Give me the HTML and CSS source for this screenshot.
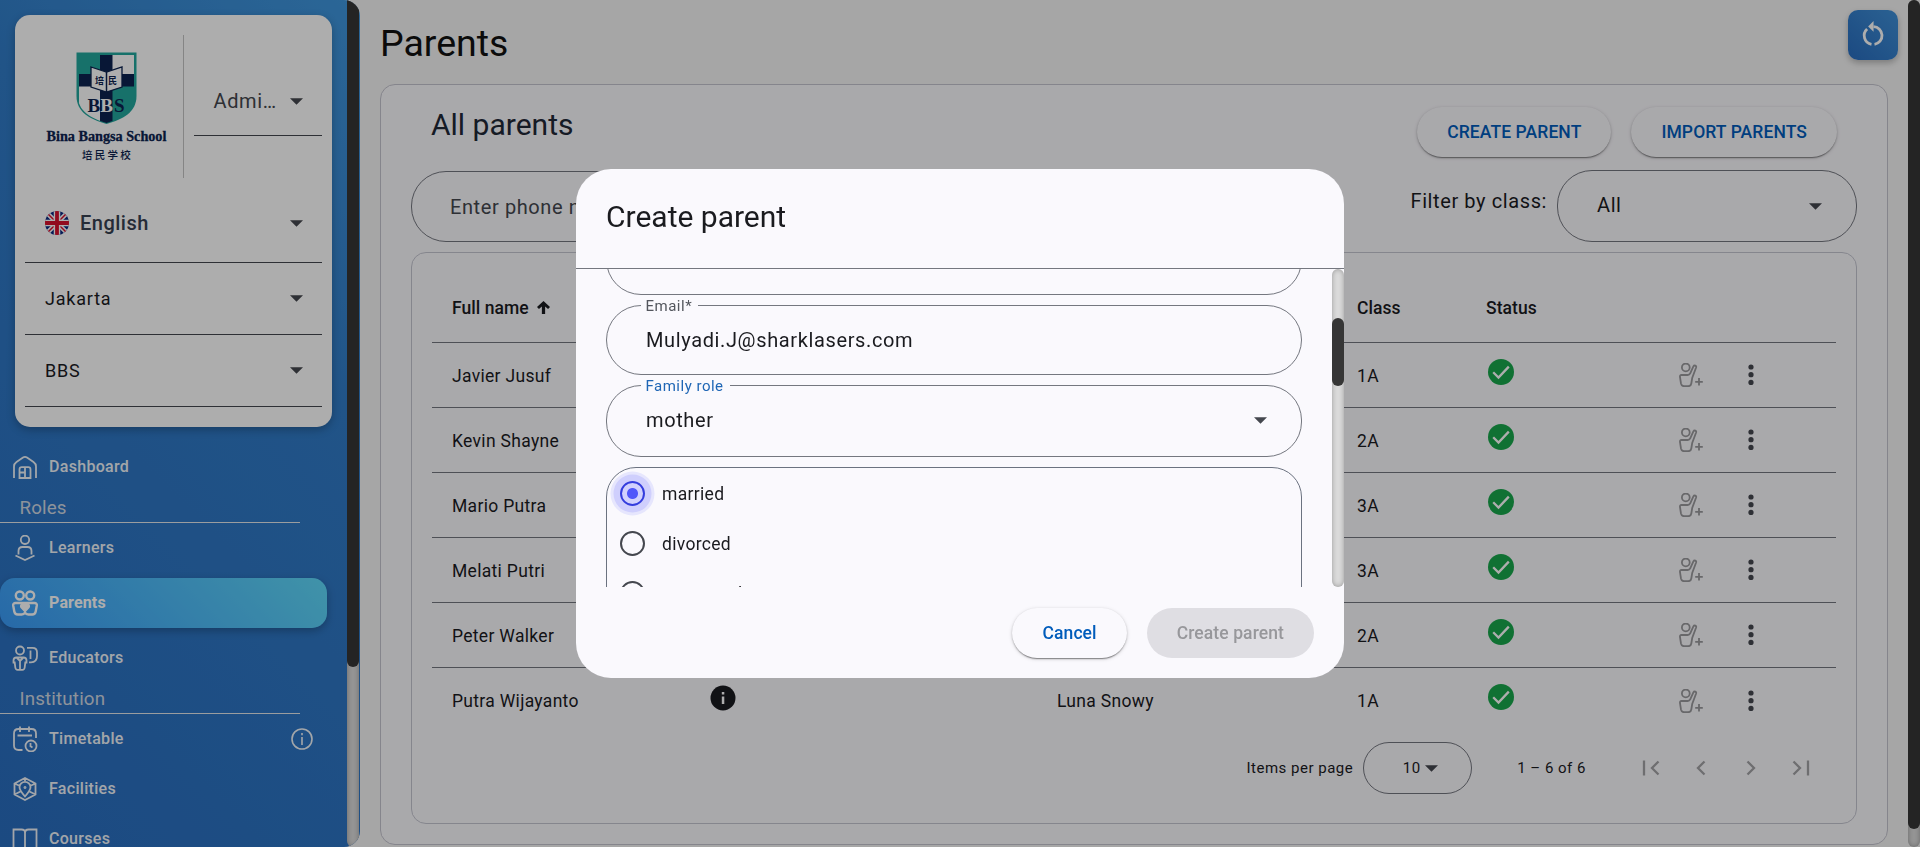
FILE: index.html
```html
<!DOCTYPE html>
<html lang="en">
<head>
<meta charset="utf-8">
<title>Parents</title>
<link rel="stylesheet" href="styles.css">
</head>
<body>
<svg class="sprite" aria-hidden="true">
  <symbol id="caret" viewBox="0 0 14 7"><path d="M0 0h14L7 7z"/></symbol>
  <symbol id="check" viewBox="0 0 26 26"><circle cx="13" cy="13" r="13" fill="#19a74c"/><path d="M5.2 13.3l5.3 5.3L20.8 7.6" fill="none" stroke="#fff" stroke-width="2.3"/></symbol>
  <symbol id="add-child" viewBox="0 0 24 24"><g fill="none" stroke="currentColor" stroke-width="1.8"><circle cx="6.800" cy="4.400" r="3.900"/><path d="M2.500 12h6.200c1.300 0 2-.5 2.500-1.600l3.200-7c.9-1.700 3.300-.8 2.700 1.100L13.200 15l-.9 5.500c-.3 1.800-1.300 2.700-3 2.700H5c-1.700 0-2.700-.9-3-2.500L1 14.200C.8 12.800 1.300 12 2.500 12z"/><path d="M20 15v7.600M16.200 18.800h7.600"/></g></symbol>
  <symbol id="dots" viewBox="0 0 6 22"><circle cx="3" cy="3" r="2.600"/><circle cx="3" cy="10.700" r="2.600"/><circle cx="3" cy="18.400" r="2.600"/></symbol>
</svg>

<aside class="sidebar">
  <div class="sidebar-body">
    <section class="school-card">
      <div class="school-top">
        <div class="logo">
          <svg width="61" height="72" viewBox="0 0 61 72">
            <defs><clipPath id="shield"><path d="M2 2h57v42c0 15-12 22-28.500 27C14 66 2 59 2 44z"/></clipPath></defs>
            <path d="M.5.5h60V44c0 16-13 23-30 28C13.500 67 .5 60 .5 44z" fill="#22a79d"/>
            <g clip-path="url(#shield)">
              <path d="M2 2h57v70H2z" fill="#22a79d"/>
              <path d="M36 3h22v20H36zM3 34h22v36H3z" fill="#fff"/>
              <path d="M24 3h12.500v68H24zM3 22h55v12.500H3z" fill="#0c2350"/>
            </g>
            <path d="M15 15l15.500 5L46 15v20l-15.500 5L15 35z" fill="#fff" stroke="#0c2350" stroke-width="1.300"/>
            <path d="M30.500 20v20" stroke="#0c2350" stroke-width="1.500"/>
            <text x="19" y="31.500" class="logo-han">培</text><text x="32" y="31.500" class="logo-han">民</text>
            <text y="60" class="logo-bbs"><tspan x="11.500">B</tspan><tspan x="24.300" fill="#fff">B</tspan><tspan x="38">S</tspan></text>
          </svg>
          <div class="logo-name">Bina Bangsa School</div>
          <div class="logo-cn">培民学校</div>
        </div>
        <div class="role-select"><span>Admi…</span><svg class="caret"><use href="#caret"/></svg></div>
      </div>
      <div class="line-select language">
        <svg class="flag" viewBox="0 0 24 24">
          <defs><clipPath id="round"><circle cx="12" cy="12" r="12"/></clipPath></defs>
          <g clip-path="url(#round)"><path d="M0 0h24v24H0z" fill="#0b2a80"/><path d="M0 0l24 24M24 0L0 24" stroke="#fff" stroke-width="4.500"/><path d="M0 0l24 24M24 0L0 24" stroke="#d8112d" stroke-width="1.500"/><path d="M12 0v24M0 12h24" stroke="#fff" stroke-width="6.500"/><path d="M12 0v24M0 12h24" stroke="#d8112d" stroke-width="3.800"/></g>
        </svg>
        <span>English</span><svg class="caret"><use href="#caret"/></svg>
      </div>
      <div class="line-select"><span>Jakarta</span><svg class="caret"><use href="#caret"/></svg></div>
      <div class="line-select"><span>BBS</span><svg class="caret"><use href="#caret"/></svg></div>
    </section>

    <nav class="nav">
      <a class="nav-item"><svg class="nav-icon" viewBox="0 0 26 26"><path d="M2 24V12.500C2 10.500 3 9 4.500 8L11 3.500c1.300-.9 2.700-.9 4 0L21.500 8C23 9 24 10.500 24 12.500V24M7.500 24v-8.500c0-1.500.8-2.300 2.300-2.300h6.400c1.500 0 2.300.8 2.300 2.300V24zM7.500 18.500h5M13 13v11"/></svg>Dashboard</a>
      <h3 class="nav-heading">Roles</h3>
      <a class="nav-item spaced"><svg class="nav-icon" viewBox="0 0 26 26"><circle cx="13" cy="4.800" r="4.200"/><path d="M6.500 19.500V16c0-2.500 1.500-4 4-4h5c2.500 0 4 1.500 4 4v3.500M3.500 20.500l9.500 4.500 9.500-4.500"/></svg>Learners</a>
      <a class="nav-item spaced active"><svg class="nav-icon" viewBox="0 0 26 26"><circle cx="7.800" cy="5.500" r="4"/><circle cx="18.200" cy="5.500" r="4"/><path d="M3.500 13h19c1.700 0 2.500 1 2.300 2.500l-1.100 6c-.4 2-1.600 3-3.400 3h-4c-1.500 0-2.500-.5-3.300-1.800-.8 1.300-1.800 1.800-3.300 1.800h-4c-1.800 0-3-1-3.400-3l-1.100-6C1 14 1.800 13 3.500 13z"/><path d="M13 21l-3.500-3.700c-1.500-2.300 1.700-4.300 3.500-2 1.800-2.300 5-.3 3.500 2z" fill="currentColor"/></svg>Parents</a>
      <a class="nav-item"><svg class="nav-icon" viewBox="0 0 26 26"><circle cx="8" cy="5.500" r="4"/><path d="M4.500 12.500h7c2 0 3 1.200 3 3v2h-1.200l-.6 5c-.2 1.500-1 2.300-2.300 2.300H5.600c-1.300 0-2.100-.8-2.300-2.300l-.6-5H1.500v-2c0-1.800 1-3 3-3zM5 13l3 3 3-3M8 16v8M15 2.800h5.500c3 0 4.500 1.500 4.500 4.500v4c0 4-2 6-6 6h-2M18.500 5.500v8.500"/></svg>Educators</a>
      <h3 class="nav-heading">Institution</h3>
      <a class="nav-item"><svg class="nav-icon" viewBox="0 0 26 26"><path d="M10.500 24H6.500c-3 0-4.500-1.500-4.500-4.500V7.500C2 4.500 3.500 3 6.500 3h13C22.500 3 24 4.500 24 7.500V12M8 .5V6M17 .5V6M5.500 9.500H20"/><circle cx="19" cy="20" r="5.500"/><path d="M18.500 17v3.300l2 1.200"/></svg>Timetable<svg class="nav-info" viewBox="0 0 22 22"><circle cx="11" cy="11" r="10"/><path d="M11 9v8M11 5v2.200"/></svg></a>
      <a class="nav-item"><svg class="nav-icon" viewBox="0 0 26 26"><path d="M13 2l10.500 5.500v11L13 24 2.500 18.500v-11zM13 2v3M2.500 7.500l5 2.200M23.500 7.500l-5 2.200M2.500 18.500l6.500-3.300M23.500 18.500L17 15.200M13 20.500c-3.500-4-5.500-6.500-5.500-9.200a5.500 5.500 0 0 1 11 0c0 2.700-2 5.200-5.500 9.200z"/><circle cx="13" cy="11.500" r=".6"/></svg>Facilities</a>
      <a class="nav-item"><svg class="nav-icon" viewBox="0 0 26 26"><path d="M13 7c0-2.500-1-3.500-3.500-3.500H1.500V22H10c2 0 3 .8 3 2.500 0-1.700 1-2.500 3-2.500h8.500V3.500h-8C14 3.500 13 4.500 13 7zv17"/></svg>Courses</a>
    </nav>
  </div>
  <div class="track"><div class="thumb side-thumb"></div></div>
</aside>

<main class="main">
  <div class="content">
    <header class="page-head">
      <h1>Parents</h1>
      <button class="refresh"><svg width="26" height="28" viewBox="0 0 24 26"><g fill="none" stroke="#fff" stroke-width="2.600"><path d="M12.500 5.300a8.200 8.200 0 0 1 .9 16.300"/><path d="M10.600 21.600A8.200 8.200 0 0 1 6.500 7.500"/></g><path d="M12.500 0v10L7.500 5z" fill="#fff"/></svg></button>
    </header>
    <section class="panel">
      <div class="panel-head">
        <h2>All parents</h2>
        <div class="panel-actions"><button class="btn raised">CREATE PARENT</button><button class="btn raised">IMPORT PARENTS</button></div>
      </div>
      <div class="filters">
        <div class="search">Enter phone number</div>
        <div class="class-filter"><span>Filter by class:</span><div class="pill-select">All<svg class="caret"><use href="#caret"/></svg></div></div>
      </div>
      <div class="table-card">
        <div class="row head"><span>Full name<svg class="sort" viewBox="0 0 12 12"><path d="M6 0l6 5.500-1.800 1.900L7.500 5V12h-3V5L1.800 7.400 0 5.500z"/></svg></span><span></span><span></span><span>Class</span><span>Status</span></div>
        <div class="row"><span>Javier Jusuf</span><span></span><span></span><span>1A</span><svg class="check"><use href="#check"/></svg><svg class="add"><use href="#add-child"/></svg><svg class="dots"><use href="#dots"/></svg></div>
        <div class="row"><span>Kevin Shayne</span><span></span><span></span><span>2A</span><svg class="check"><use href="#check"/></svg><svg class="add"><use href="#add-child"/></svg><svg class="dots"><use href="#dots"/></svg></div>
        <div class="row"><span>Mario Putra</span><span></span><span></span><span>3A</span><svg class="check"><use href="#check"/></svg><svg class="add"><use href="#add-child"/></svg><svg class="dots"><use href="#dots"/></svg></div>
        <div class="row"><span>Melati Putri</span><span></span><span></span><span>3A</span><svg class="check"><use href="#check"/></svg><svg class="add"><use href="#add-child"/></svg><svg class="dots"><use href="#dots"/></svg></div>
        <div class="row"><span>Peter Walker</span><span></span><span></span><span>2A</span><svg class="check"><use href="#check"/></svg><svg class="add"><use href="#add-child"/></svg><svg class="dots"><use href="#dots"/></svg></div>
        <div class="row last"><span>Putra Wijayanto</span><svg class="check info" viewBox="0 0 26 26"><circle cx="13" cy="13" r="12.500" fill="#1a1b1f"/><path d="M11.800 11.500h2.500V19h-2.500zM11.800 7h2.500v2.500h-2.500z" fill="#fff"/></svg><span>Luna Snowy</span><span>1A</span><svg class="check"><use href="#check"/></svg><svg class="add"><use href="#add-child"/></svg><svg class="dots"><use href="#dots"/></svg></div>
        <div class="paginator">
          <span class="per-page">Items per page</span>
          <div class="page-size">10<svg class="caret"><use href="#caret"/></svg></div>
          <span class="range">1 – 6 of 6</span>
          <svg class="pager" viewBox="0 0 50 30"><path d="M18 7.500v15M32.500 8.500L26 15l6.500 6.500"/></svg>
          <svg class="pager" viewBox="0 0 50 30"><path d="M28.500 8.500L22 15l6.500 6.500"/></svg>
          <svg class="pager" viewBox="0 0 50 30"><path d="M21.500 8.500L28 15l-6.500 6.500"/></svg>
          <svg class="pager" viewBox="0 0 50 30"><path d="M17.500 8.500l6.500 6.500-6.500 6.500M32 7.500v15"/></svg>
        </div>
      </div>
    </section>
  </div>
  <div class="track"><div class="thumb main-thumb"></div></div>
</main>

<div class="backdrop">
  <div class="dialog">
    <h2 class="dialog-title">Create parent</h2>
    <div class="dialog-scroll">
      <form class="fields">
        <fieldset class="field cut"></fieldset>
        <fieldset class="field email"><legend>Email*</legend>Mulyadi.J@sharklasers.com</fieldset>
        <fieldset class="field role"><legend>Family role</legend>mother<svg class="caret"><use href="#caret"/></svg></fieldset>
        <div class="status-group">
          <label class="radio on"><i></i><span>married</span></label>
          <label class="radio"><i></i><span>divorced</span></label>
          <label class="radio"><i></i><span>separated</span></label>
        </div>
      </form>
      <div class="track"><div class="thumb dialog-thumb"></div></div>
    </div>
    <div class="dialog-actions"><button class="btn raised">Cancel</button><button class="btn disabled">Create parent</button></div>
  </div>
</div>
</body>
</html>
```
FILE: styles.css
```css
* { box-sizing: border-box; }
body { margin: 0; height: 847px; overflow: hidden; display: flex; background: #f5f5f5; font-family: Roboto, "Noto Sans CJK SC", sans-serif; color: #1a1b1f; }
h1, h2, h3 { margin: 0; font-weight: 400; }
button { font-family: inherit; border: 0; }
.sprite { display: none; }
.caret { width: 13px; height: 7px; fill: #44474e; flex: none; }

.track { width: 12px; flex: none; background: #dadada; border-radius: 10px; box-shadow: inset 0 0 5px rgba(0, 0, 0, .3); }
.thumb { background: #363636; border-radius: 10px; }

/* Sidebar */
.sidebar { width: 360px; height: 847px; flex: none; display: flex; padding-right: 1px; overflow: hidden; border-radius: 0 16px 16px 0; background: linear-gradient(225deg, #4098df 0%, #317cc8 35%, #296dbf 100%); }
.sidebar-body { width: 347px; height: 847px; overflow: hidden; padding-top: 15px; }
.side-thumb { height: 667px; border-radius: 0 0 10px 10px; }
.school-card { width: 317px; height: 412px; margin-left: 15px; padding: 20px 10px 0; background: #fff; border-radius: 15px; box-shadow: 0 3px 8px rgba(0, 0, 0, .25); }
.school-top { display: flex; height: 143px; margin-bottom: 13px; }
.logo { width: 159px; border-right: 1px solid #c4c4c4; display: flex; flex-direction: column; align-items: center; padding: 17px 0 0 5px; color: #0c2350; }
.logo svg { flex: none; }
.logo-name { font: bold 14.200px/20px "Liberation Serif", serif; white-space: nowrap; margin-top: 2px; -webkit-text-stroke: .3px #0c2350; }
.logo-cn { font: 500 10.500px/14px "Noto Sans CJK SC", sans-serif; letter-spacing: 2.200px; margin: 2px 0 0 2px; }
.logo-han { font: bold 9px "Noto Sans CJK SC", sans-serif; fill: #0c2350; }
.logo-bbs { font: bold 19px "Liberation Serif", serif; fill: #0c2350; }
.role-select { width: 128px; height: 68px; margin: 33px 0 0 10px; padding: 0 19px 1px 19.500px; display: flex; align-items: center; justify-content: space-between; border-bottom: 1px solid #44474e; font-size: 20px; letter-spacing: .625px; color: #44474e; }
.line-select { height: 72px; padding: 0 19.500px 0 20px; display: flex; align-items: center; border-bottom: 1px solid #44474e; font-size: 18px; letter-spacing: .800px; }
.line-select .caret { margin-left: auto; }
.language { font-size: 20px; font-weight: 500; letter-spacing: .500px; color: #374151; padding-bottom: 7px; }
.flag { width: 24px; height: 24px; margin-right: 11px; }
.nav { padding-top: 15px; color: #fff; }
.nav-item { display: flex; align-items: center; height: 50px; width: 327px; padding: 0 14px 1px 12px; font-size: 16px; font-weight: 500; letter-spacing: .300px; opacity: .93; }
.spaced { margin-bottom: 5px; }
.nav-icon { width: 26px; height: 26px; margin-right: 11px; fill: none; stroke: currentColor; stroke-width: 1.800; }
.nav-info { width: 22px; height: 22px; margin-left: auto; fill: none; stroke: #fff; stroke-width: 1.600; }
.nav-heading { width: 300px; height: 31px; padding-left: 19.500px; font-size: 18.750px; line-height: 33px; color: #d1d9e4; border-bottom: 1px solid #e5e7eb; letter-spacing: .150px; }
.active { border-radius: 15px; background: linear-gradient(45deg, #3a9bf8, #5fd9fa); box-shadow: 0 3px 8px rgba(0, 0, 0, .25); opacity: 1; font-weight: 700; letter-spacing: .150px; }
.active .nav-icon { stroke-width: 2.400; }

/* Main area */
.main { flex: 1; height: 847px; display: flex; justify-content: space-between; }
.main-thumb { height: 829px; }
.content { width: 1508px; margin-left: 20px; }
.page-head { display: flex; justify-content: space-between; height: 84px; margin-right: -10px; }
.page-head h1 { font-size: 37.500px; line-height: 86px; color: #111; }
.refresh { width: 50px; height: 50px; margin-top: 10px; padding: 0 1px 0 0; border-radius: 10px; background: linear-gradient(45deg, #296dbf, #3f90d8); box-shadow: 0 3px 6px rgba(0, 0, 0, .25); display: grid; place-items: center; }
.panel { height: 761px; padding: 0 30px; border: 1px solid #c4c4ce; border-radius: 15px; background: #faf9fd; }
.panel-head { display: flex; justify-content: space-between; padding: 22px 20px 0; height: 85px; }
.panel-head h2 { font-size: 30px; line-height: 36px; color: #1f2937; }
.panel-actions { display: flex; gap: 20px; }
.btn { height: 50px; padding: 0 30px; border-radius: 25px; font-size: 17.500px; font-weight: 500; letter-spacing: .100px; background: #faf9fd; }
.raised { color: #005cbb; box-shadow: 0 2px 1px -1px rgba(0, 0, 0, .3), 0 1px 2px rgba(0, 0, 0, .2), 0 1px 4px rgba(0, 0, 0, .14); }
.filters { display: flex; justify-content: space-between; height: 82px; font-size: 20px; letter-spacing: .600px; }
.search { width: 500px; height: 71px; margin-top: 1px; padding-left: 38px; line-height: 70px; border: 1px solid #74777f; border-radius: 35px; color: #44474e; }
.class-filter { display: flex; gap: 10px; line-height: 63px; }
.pill-select { width: 300px; height: 72px; padding: 0 34px 2px 39px; display: flex; align-items: center; justify-content: space-between; border: 1px solid #74777f; border-radius: 35px; line-height: 1; }
.pill-select .caret { margin-top: 2px; }
.table-card { height: 572px; padding: 25px 20px 0; border: 1px solid #c4c6d0; border-radius: 15px; }
.row { display: grid; grid-template-columns: 258px 347px 300px 129px 193px 62px 95px; align-items: center; height: 65px; padding: 1px 0 0 20px; border-bottom: 1px solid #74777f; font-size: 17.500px; letter-spacing: .312px; }
.row.head { font-weight: 500; letter-spacing: .060px; padding: 0 0 5px 20px; }
.row.last { border-bottom: 0; }
.check { width: 26px; height: 26px; margin: 0 0 8px 2px; }
.check.info { margin: 0 0 6px; }
.add { width: 24px; height: 24px; margin-bottom: 1px; color: #9a9a9d; }
.dots { width: 6px; height: 22px; margin: 0 0 1px 7px; fill: #44474e; }
.sort { width: 13px; height: 13px; margin: 0 0 -.5px 8px; fill: #1a1b1f; }
.paginator { display: flex; align-items: center; justify-content: flex-end; height: 70px; padding: 0 10px 0 0; font-size: 15px; letter-spacing: .500px; }
.page-size { width: 109px; height: 52px; margin: 0 45px 0 10px; border: 1px solid #74777f; border-radius: 26px; display: flex; align-items: center; justify-content: center; gap: 4px; padding-left: 5px; }
.range { margin-right: 40px; }
.pager { width: 50px; height: 30px; fill: none; stroke: #a3a3a6; stroke-width: 2.300; }

/* Dialog */
.backdrop { position: fixed; inset: 0; display: grid; place-items: center; background: rgba(0, 0, 0, .32); }
.dialog { width: 768px; height: 509px; overflow: hidden; border-radius: 35px; background: #faf9fd; }
.dialog-title { height: 100px; padding-left: 30px; font-size: 30px; line-height: 95px; border-bottom: 1px solid #74777f; }
.dialog-scroll { height: 318px; display: flex; justify-content: space-between; overflow: hidden; }
.fields { width: 696px; margin-left: 30px; }
.field { position: relative; height: 77px; margin: 0 0 3px; padding: 0 34px 0 39px; border: 1px solid #74777f; border-radius: 35px; font-size: 20px; line-height: 55px; letter-spacing: .625px; min-width: 0; }
.field legend { padding: 0 6px 0 5px; margin-left: -5.500px; height: 15px; font-size: 15px; line-height: 16px; letter-spacing: .500px; color: #53565d; }
.field.cut { height: 71px; margin-top: -45px; }
.field.role { height: 79px; line-height: 54px; }
.field.role legend { color: #1f66b5; }
.field .caret { position: absolute; right: 34px; top: 24px; }
.status-group { margin-top: 10px; height: 400px; border: 1px solid #6b7280; border-radius: 30px; }
.radio { display: flex; align-items: center; height: 50px; padding-left: 13px; font-size: 17.500px; letter-spacing: .312px; }
.radio span { padding-top: 2px; }
.radio i { width: 25px; height: 25px; margin-right: 17px; border: 2px solid #44474e; border-radius: 50%; }
.radio.on i { border-color: #343dde; background: radial-gradient(circle, #5057fa 0 5px, #d1d1fd 6px); box-shadow: 0 0 0 6.500px #cfcffd, 0 0 0 9.500px #e6e6fd; }
.dialog-thumb { height: 68px; margin-top: 49px; }
.dialog-actions { display: flex; justify-content: flex-end; gap: 20px; padding: 21px 30px 0 0; }
.disabled { background: #dfdee3; color: #97979b; }
```
